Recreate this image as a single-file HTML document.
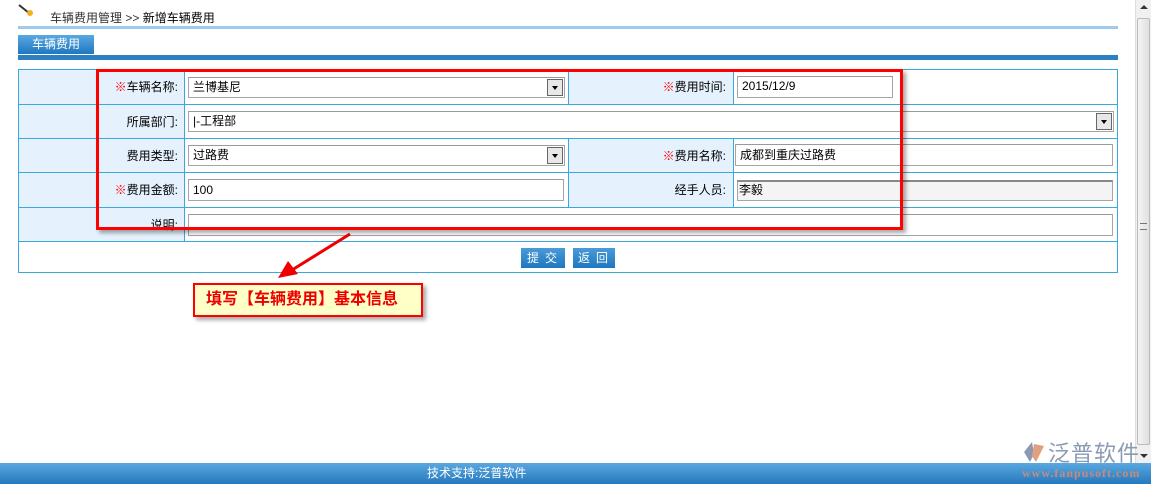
<!DOCTYPE html>
<html><head><meta charset="utf-8"><style>
*{margin:0;padding:0;box-sizing:border-box}
body{width:1151px;height:484px;position:relative;overflow:hidden;background:#fff;font-family:"Liberation Sans","Noto Sans CJK SC","WenQuanYi Zen Hei",sans-serif;font-size:12px;color:#000}
.a{position:absolute}
.lab{position:absolute;background:#e5f1fd;text-align:right;font-size:12px;line-height:36px;padding-right:7px}
.req{color:#f00}
.hl{position:absolute;left:18px;width:1100px;height:1px;background:#3aa7dd}
.vl{position:absolute;width:1px;background:#3aa7dd}
.inp{position:absolute;border:1px solid #a5a5a5;border-top-color:#9a9a9a;background:#fff;font-size:12px;line-height:19px;padding-left:4px;height:21px}
.dd{position:absolute;right:1px;top:1px;width:16px;height:17px;background:#e8e8e8;border:1px solid #666;}
.dd:after{content:"";position:absolute;left:4px;top:6px;border-left:3px solid transparent;border-right:3px solid transparent;border-top:4px solid #000}
.btn{position:absolute;top:248px;height:20px;background:linear-gradient(#4a9bd6,#1f77c0);color:#fff;font-size:12px;line-height:20px;text-align:center;letter-spacing:6px;padding-left:4px}
</style></head><body>
<svg class="a" style="left:17px;top:3px" width="18" height="14"><line x1="2" y1="2" x2="12" y2="10" stroke="#333" stroke-width="2"/><circle cx="13" cy="10" r="3" fill="#f0b020"/></svg>
<div class="a" style="left:50px;top:9px;font-size:12px;color:#333">车辆费用管理 &gt;&gt; <span style="color:#000">新增车辆费用</span></div>
<div class="a" style="left:18px;top:26px;width:1100px;height:3px;background:#9fcaec"></div>
<div class="a" style="left:18px;top:35px;width:76px;height:19px;background:linear-gradient(#5aa8e0,#1f77c0);color:#fff;font-size:12px;line-height:19px;padding-left:14px">车辆费用</div>
<div class="a" style="left:18px;top:55px;width:1100px;height:5px;background:#2a80c2"></div>
<div class="lab" style="left:18px;top:69px;width:167px;height:35px"><span class="req">※</span>车辆名称:</div>
<div class="lab" style="left:568px;top:69px;width:165px;height:35px"><span class="req">※</span>费用时间:</div>
<div class="lab" style="left:18px;top:104px;width:167px;height:34px">所属部门:</div>
<div class="lab" style="left:18px;top:138px;width:167px;height:34px">费用类型:</div>
<div class="lab" style="left:568px;top:138px;width:165px;height:34px"><span class="req">※</span>费用名称:</div>
<div class="lab" style="left:18px;top:172px;width:167px;height:35px"><span class="req">※</span>费用金额:</div>
<div class="lab" style="left:568px;top:172px;width:165px;height:35px">经手人员:</div>
<div class="lab" style="left:18px;top:207px;width:167px;height:34px">说明:</div>
<div class="hl" style="top:69px"></div><div class="hl" style="top:104px"></div><div class="hl" style="top:138px"></div><div class="hl" style="top:172px"></div><div class="hl" style="top:207px"></div><div class="hl" style="top:241px"></div><div class="hl" style="top:272px"></div>
<div class="vl" style="left:18px;top:69px;height:204px"></div>
<div class="vl" style="left:1117px;top:69px;height:204px"></div>
<div class="vl" style="left:184px;top:69px;height:172px"></div>
<div class="vl" style="left:568px;top:69px;height:35px"></div>
<div class="vl" style="left:733px;top:69px;height:35px"></div>
<div class="vl" style="left:568px;top:138px;height:69px"></div>
<div class="vl" style="left:733px;top:138px;height:69px"></div>
<div class="inp" style="left:188px;top:77px;width:377px">兰博基尼<div class="dd"></div></div>
<div class="inp" style="left:737px;top:76px;width:156px;height:22px">2015/12/9</div>
<div class="inp" style="left:188px;top:111px;width:926px">|-工程部<div class="dd"></div></div>
<div class="inp" style="left:188px;top:145px;width:377px">过路费<div class="dd"></div></div>
<div class="inp" style="left:735px;top:144px;width:378px;height:22px;line-height:20px">成都到重庆过路费</div>
<div class="inp" style="left:188px;top:179px;width:376px;height:22px;line-height:20px">100</div>
<div class="inp" style="left:737px;top:180px;width:376px;background:#f4f4f4;border-top:2px solid #888;padding-left:1px;line-height:17px">李毅</div>
<div class="inp" style="left:188px;top:214px;width:925px;height:22px"></div>
<div class="btn" style="left:521px;width:44px">提交</div>
<div class="btn" style="left:573px;width:42px">返回</div>
<div class="a" style="left:96px;top:69px;width:807px;height:161px;border:3px solid #f00;box-shadow:3px 3px 4px rgba(0,0,0,.35)"></div>
<svg class="a" style="left:270px;top:228px" width="90" height="60"><line x1="80" y1="6" x2="22" y2="42" stroke="#e00" stroke-width="3"/><polygon points="8,50 18,33 28,46" fill="#e00"/></svg>
<div class="a" style="left:193px;top:283px;width:230px;height:34px;background:#ffffc8;border:2px solid #f00;box-shadow:3px 3px 4px rgba(0,0,0,.35);color:#e00;font-weight:bold;font-size:16px;line-height:30px;padding-left:11px;white-space:nowrap">填写【车辆费用】基本信息</div>
<div class="a" style="left:1135px;top:0;width:16px;height:463px;background:#f0f0f0;border-left:1px solid #ddd"></div>
<div class="a" style="left:1137px;top:18px;width:13px;height:427px;background:linear-gradient(90deg,#f4f4f4,#e0e0e0);border:1px solid #bbb;border-radius:2px"></div>
<div class="a" style="left:1140px;top:5px;border-left:4px solid transparent;border-right:4px solid transparent;border-bottom:4px solid #333"></div>
<div class="a" style="left:1140px;top:454px;border-left:4px solid transparent;border-right:4px solid transparent;border-top:4px solid #333"></div>
<div class="a" style="left:1140px;top:223px;width:7px;height:7px;border-top:1px solid #777;border-bottom:1px solid #777"></div>
<svg class="a" style="left:1020px;top:440px" width="26" height="24"><path d="M12 2 L4 12 L10 22 L14 14 Z" fill="#8a9ab5"/><path d="M14 4 L24 6 L16 22 L12 16 Z" fill="#e0a080"/></svg>
<div class="a" style="left:1048px;top:436px;font-size:22px;color:#8a9ab5;letter-spacing:1px">泛普软件</div>
<div class="a" style="left:0;top:463px;width:1151px;height:21px;background:linear-gradient(#5aa8e0,#2478bd)"></div>
<div class="a" style="left:427px;top:463px;color:#fff;font-size:12px;line-height:21px">技术支持:泛普软件</div>
<div class="a" style="left:1022px;top:466px;font-size:12px;color:#c98a7a;font-family:'Liberation Serif',serif;font-weight:bold;letter-spacing:1px">www.fanpusoft.com</div>
</body></html>
